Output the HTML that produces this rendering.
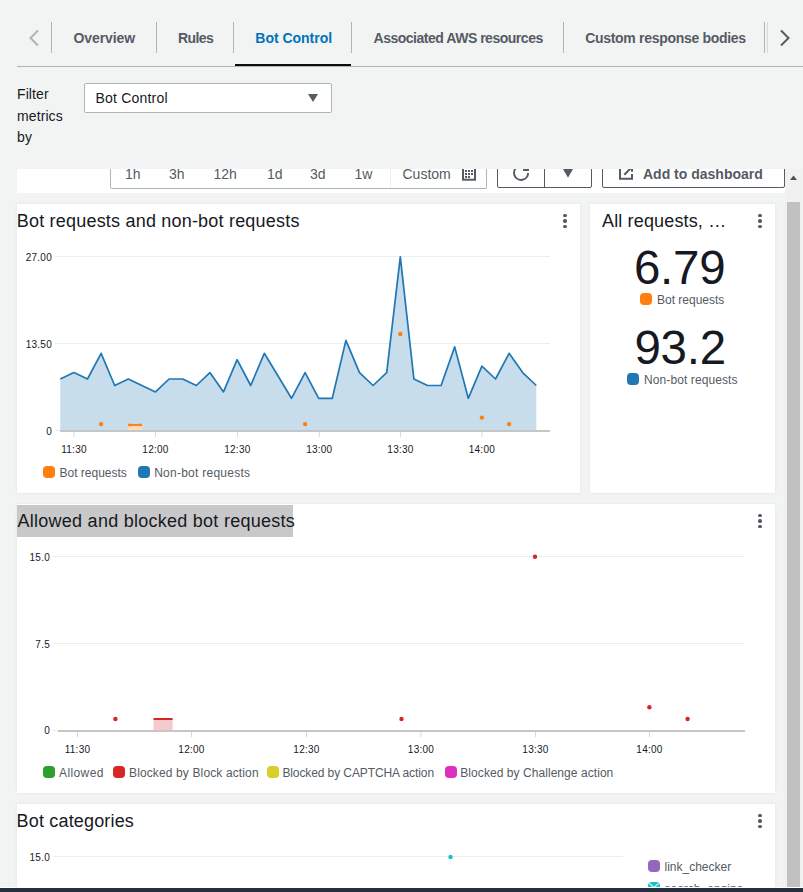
<!DOCTYPE html>
<html><head><meta charset="utf-8">
<style>
*{margin:0;padding:0;box-sizing:border-box}
html,body{width:803px;height:892px;overflow:hidden;background:#f2f3f3;font-family:"Liberation Sans",sans-serif;color:#16191f}
.a{position:absolute;white-space:nowrap}
.tab{position:absolute;top:30px;font-size:14px;font-weight:bold;color:#545b64;line-height:16px;text-align:center}
.div{position:absolute;top:22px;width:1px;height:31px;background:#aab7b8}
.card{position:absolute;background:#fff;box-shadow:0 0 3px rgba(0,0,0,.07)}
.title{position:absolute;font-size:18px;letter-spacing:0.17px;line-height:22px;color:#16191f;white-space:nowrap}
.kebab{position:absolute;width:4px;height:14px}
.kebab i{position:absolute;left:0.3px;width:3.4px;height:3.4px;border-radius:50%;background:#545b64}
.lbl{position:absolute;font-size:10px;letter-spacing:0.25px;line-height:12px;color:#16191f;white-space:nowrap}
.leg{position:absolute;font-size:12px;line-height:14px;color:#545b64;white-space:nowrap}
.sw{position:absolute;width:12px;height:12px;border-radius:4px}
.seg{position:absolute;top:165.7px;font-size:14px;color:#545b64;line-height:16px}
</style></head><body>

<!-- Tabs -->
<svg class="a" style="left:0;top:0" width="803" height="70">
  <polyline points="38,30.5 30.5,38 38,45.5" fill="none" stroke="#aab7b8" stroke-width="2"/>
  <polyline points="781,30.5 788.5,38 781,45.5" fill="none" stroke="#545b64" stroke-width="2"/>
  <rect x="17" y="66" width="786" height="1" fill="#aab7b8"/>
  <rect x="235" y="64" width="116" height="2" fill="#0a0d12"/>
</svg>
<div class="div" style="left:51px"></div>
<div class="div" style="left:156px"></div>
<div class="div" style="left:233px"></div>
<div class="div" style="left:351px"></div>
<div class="div" style="left:563px"></div>
<div class="div" style="left:764px"></div>
<div class="div" style="left:767px;background:#d5dbdb"></div>
<div class="tab" style="left:73.5px;letter-spacing:-0.1px">Overview</div>
<div class="tab" style="left:178px;letter-spacing:-0.6px">Rules</div>
<div class="tab" style="left:255.3px;color:#0073bb;letter-spacing:-0.02px">Bot Control</div>
<div class="tab" style="left:373.5px;letter-spacing:-0.48px">Associated AWS resources</div>
<div class="tab" style="left:585.2px;letter-spacing:-0.3px">Custom response bodies</div>

<!-- Filter -->
<div class="a" style="left:17px;top:83.8px;font-size:14px;line-height:21.8px;letter-spacing:0.1px;color:#16191f;white-space:normal;width:60px">Filter<br>metrics<br>by</div>
<div class="a" style="left:84px;top:83px;width:248px;height:30px;background:#fff;border:1px solid #aab7b8;border-radius:2px"></div>
<div class="a" style="left:95.5px;top:90px;font-size:14px;line-height:16px;letter-spacing:0.2px;color:#16191f">Bot Control</div>
<svg class="a" style="left:307px;top:93px" width="12" height="10"><polygon points="1,1 11,1 6,9" fill="#545b64"/></svg>

<!-- Dashboard clip -->
<div class="a" style="left:0;top:169px;width:785px;height:719px;overflow:hidden">
 <div class="a" style="left:0;top:-169px;width:785px;height:1100px">
  <!-- header strip -->
  <div class="a" style="left:17px;top:150px;width:768px;height:43px;background:#fff"></div>
  <div class="a" style="left:110px;top:150px;width:377px;height:39px;border:1px solid #aab7b8;border-top:none;border-radius:0 0 2px 2px"></div>
  <div class="a" style="left:390px;top:150px;width:1px;height:38px;background:#eaeded"></div>
  <div class="seg" style="left:125px">1h</div>
  <div class="seg" style="left:169px">3h</div>
  <div class="seg" style="left:213.5px">12h</div>
  <div class="seg" style="left:267px">1d</div>
  <div class="seg" style="left:310px">3d</div>
  <div class="seg" style="left:354.5px">1w</div>
  <div class="seg" style="left:402.5px;top:166.3px">Custom</div>
  <svg class="a" style="left:461px;top:160px" width="16" height="22">
    <rect x="2" y="1" width="12" height="18.7" fill="none" stroke="#545b64" stroke-width="2"/>
    <g fill="#545b64"><rect x="4" y="10" width="2" height="2"/><rect x="7" y="10" width="2" height="2"/><rect x="10" y="10" width="2" height="2"/>
    <rect x="4" y="13" width="2" height="2"/><rect x="7" y="13" width="2" height="2"/><rect x="10" y="13" width="2" height="2"/>
    <rect x="4" y="16" width="2" height="2"/><rect x="7" y="16" width="2" height="2"/></g>
  </svg>
  <div class="a" style="left:497px;top:150px;width:95px;height:38px;border:1px solid #545b64;border-radius:2px"></div>
  <div class="a" style="left:544px;top:150px;width:1px;height:38px;background:#545b64"></div>
  <svg class="a" style="left:510px;top:160px" width="24" height="24">
    <path d="M18.1,12.9 A7,7 0 1 1 7.6,6.84" fill="none" stroke="#545b64" stroke-width="2"/>
    <rect x="13" y="9" width="6" height="2" fill="#545b64"/>
  </svg>
  <svg class="a" style="left:562px;top:160px" width="12" height="18"><polygon points="1,9 11,9 6,17.8" fill="#545b64"/></svg>
  <div class="a" style="left:602px;top:150px;width:183px;height:38px;border:1px solid #545b64;border-radius:2px"></div>
  <svg class="a" style="left:617px;top:160px" width="18" height="22">
    <path d="M3,5 V18.85 H15 V14" fill="none" stroke="#545b64" stroke-width="2"/>
    <path d="M15,7 V11.7" fill="none" stroke="#545b64" stroke-width="2"/>
    <path d="M7.3,14.7 L14,8" fill="none" stroke="#545b64" stroke-width="2"/>
  </svg>
  <div class="a" style="left:643px;top:166px;font-size:14px;font-weight:bold;line-height:16px;color:#545b64">Add to dashboard</div>

  <!-- Card 1 -->
  <div class="card" style="left:17px;top:204px;width:563px;height:289px"></div>
  <div class="title" style="left:16.8px;top:210px;letter-spacing:0.2px">Bot requests and non-bot requests</div>
  <div class="kebab" style="left:563px;top:213px"><i style="top:0.7px"></i><i style="top:6.3px"></i><i style="top:11.8px"></i></div>

  <!-- Card 2 -->
  <div class="card" style="left:590px;top:204px;width:185px;height:289px"></div>
  <div class="title" style="left:602px;top:210px;letter-spacing:0.15px">All requests, …</div>
  <div class="kebab" style="left:758px;top:213px"><i style="top:0.7px"></i><i style="top:6.3px"></i><i style="top:11.8px"></i></div>
  <div class="a" style="left:634px;top:242.5px;font-size:47.5px;line-height:50px;letter-spacing:-0.3px;color:#16191f">6.79</div>
  <div class="sw" style="left:640px;top:293px;background:#ff7f0e"></div>
  <div class="leg" style="left:657px;top:293.0px">Bot requests</div>
  <div class="a" style="left:634.5px;top:322.5px;font-size:47.5px;line-height:50px;letter-spacing:-0.3px;color:#16191f">93.2</div>
  <div class="sw" style="left:627px;top:373px;background:#1f77b4"></div>
  <div class="leg" style="left:644px;top:373.0px;letter-spacing:0.1px">Non-bot requests</div>

  <!-- Card 3 -->
  <div class="card" style="left:17px;top:504px;width:758px;height:289px"></div>
  <div class="a" style="left:17px;top:505px;width:276px;height:32px;background:#c8c8c8"></div>
  <div class="title" style="left:17.5px;top:510px;letter-spacing:0.26px">Allowed and blocked bot requests</div>
  <div class="kebab" style="left:758px;top:513px"><i style="top:0.7px"></i><i style="top:6.3px"></i><i style="top:11.8px"></i></div>

  <!-- Card 4 -->
  <div class="card" style="left:17px;top:804px;width:758px;height:300px"></div>
  <div class="title" style="left:16.6px;top:809.5px">Bot categories</div>
  <div class="kebab" style="left:758px;top:813px"><i style="top:0.7px"></i><i style="top:6.3px"></i><i style="top:11.8px"></i></div>

  <!-- chart graphics -->
  <svg class="a" style="left:0;top:0" width="785" height="1100">
   <g fill="#eaeded">
    <rect x="55" y="256" width="495" height="1"/>
    <rect x="55" y="343" width="495" height="1"/>
    <rect x="55" y="430" width="5" height="1"/>
   </g>
   <polygon fill="#c7ddec" points="60.3,431 60.3,379.0 73.9,372.6 87.5,379.0 101.1,353.3 114.7,385.5 128.3,379.0 141.9,385.5 155.5,391.9 169.1,379.0 182.7,379.0 196.3,385.5 209.9,372.6 223.5,391.9 237.1,359.7 250.7,385.5 264.3,353.3 277.9,375.8 291.5,398.3 305.1,372.6 318.7,398.3 332.3,398.3 345.9,340.4 359.5,372.6 373.1,385.5 386.7,372.6 400.3,256.8 413.9,379.0 427.5,385.5 441.1,385.5 454.7,346.9 468.3,398.3 481.9,366.2 495.5,379.0 509.1,353.3 522.7,372.6 536.3,385.5 536.3,431"/>
   <polyline fill="none" stroke="#1f77b4" stroke-width="1.7" stroke-linejoin="round" points="60.3,379.0 73.9,372.6 87.5,379.0 101.1,353.3 114.7,385.5 128.3,379.0 141.9,385.5 155.5,391.9 169.1,379.0 182.7,379.0 196.3,385.5 209.9,372.6 223.5,391.9 237.1,359.7 250.7,385.5 264.3,353.3 277.9,375.8 291.5,398.3 305.1,372.6 318.7,398.3 332.3,398.3 345.9,340.4 359.5,372.6 373.1,385.5 386.7,372.6 400.3,256.8 413.9,379.0 427.5,385.5 441.1,385.5 454.7,346.9 468.3,398.3 481.9,366.2 495.5,379.0 509.1,353.3 522.7,372.6 536.3,385.5"/>
   <rect x="128.3" y="425" width="13.6" height="5" fill="#ffdcbc"/>
   <rect x="128.3" y="424" width="13.6" height="2" fill="#ff8519"/><circle cx="129.7" cy="425" r="1.4" fill="#ff7f0e"/><circle cx="140.5" cy="425" r="1.4" fill="#ff7f0e"/>
   <g fill="#ff7f0e">
    <circle cx="101.1" cy="424.1" r="2.2"/>
    <circle cx="305.1" cy="424.1" r="2.2"/>
    <circle cx="400.3" cy="334.0" r="2.2"/>
    <circle cx="481.9" cy="417.6" r="2.2"/>
    <circle cx="509.1" cy="424.1" r="2.2"/>
   </g>
   <rect x="60" y="430" width="490" height="2" fill="#c6c6c6"/>
   <g fill="#d5dbdb">
    <rect x="73.4" y="432" width="1" height="5"/><rect x="155" y="432" width="1" height="5"/><rect x="236.9" y="432" width="1" height="5"/>
    <rect x="318.8" y="432" width="1" height="5"/><rect x="400" y="432" width="1" height="5"/><rect x="481.4" y="432" width="1" height="5"/>
   </g>

   <!-- chart 2 -->
   <g fill="#eaeded">
    <rect x="53" y="556" width="692" height="1"/>
    <rect x="53" y="643" width="692" height="1"/>
    <rect x="53" y="730" width="5" height="1"/>
   </g>
   <rect x="153.5" y="719" width="19.1" height="11" fill="#f6c9ca"/>
   <rect x="153.5" y="718" width="19.1" height="2" fill="#d62728"/>
   <g fill="#d62728">
    <circle cx="115.4" cy="719" r="2.2"/>
    <circle cx="401.5" cy="719" r="2.2"/>
    <circle cx="535" cy="556.8" r="2.2"/>
    <circle cx="649.4" cy="707.3" r="2.2"/>
    <circle cx="687.6" cy="719" r="2.2"/>
   </g>
   <rect x="58" y="730" width="687" height="2" fill="#c6c6c6"/>
   <g fill="#d5dbdb">
    <rect x="77" y="732" width="1" height="5"/><rect x="191" y="732" width="1" height="5"/><rect x="306" y="732" width="1" height="5"/>
    <rect x="420.5" y="732" width="1" height="5"/><rect x="535" y="732" width="1" height="5"/><rect x="649" y="732" width="1" height="5"/>
   </g>

   <!-- chart 3 -->
   <rect x="53" y="856" width="570" height="1" fill="#eaeded"/>
   <circle cx="450.5" cy="857" r="2.2" fill="#17becf"/>
  </svg>

  <!-- chart 1 labels -->
  <div class="lbl" style="left:0;width:52px;text-align:right;top:251.5px">27.00</div>
  <div class="lbl" style="left:0;width:52px;text-align:right;top:338.5px">13.50</div>
  <div class="lbl" style="left:0;width:52px;text-align:right;top:426px">0</div>
  <div class="lbl" style="left:49px;width:50px;text-align:center;top:443.6px">11:30</div>
  <div class="lbl" style="left:130.5px;width:50px;text-align:center;top:443.6px">12:00</div>
  <div class="lbl" style="left:212.4px;width:50px;text-align:center;top:443.6px">12:30</div>
  <div class="lbl" style="left:294.3px;width:50px;text-align:center;top:443.6px">13:00</div>
  <div class="lbl" style="left:375.5px;width:50px;text-align:center;top:443.6px">13:30</div>
  <div class="lbl" style="left:456.9px;width:50px;text-align:center;top:443.6px">14:00</div>
  <div class="sw" style="left:43px;top:466px;background:#ff7f0e"></div>
  <div class="leg" style="left:59.5px;top:466.0px">Bot requests</div>
  <div class="sw" style="left:138px;top:466px;background:#1f77b4"></div>
  <div class="leg" style="left:154.2px;top:466.0px;letter-spacing:0.25px">Non-bot requests</div>

  <!-- chart 2 labels -->
  <div class="lbl" style="left:0;width:50px;text-align:right;top:551.5px">15.0</div>
  <div class="lbl" style="left:0;width:50px;text-align:right;top:638.5px">7.5</div>
  <div class="lbl" style="left:0;width:50px;text-align:right;top:725.3px">0</div>
  <div class="lbl" style="left:52.5px;width:50px;text-align:center;top:743.6px">11:30</div>
  <div class="lbl" style="left:166.5px;width:50px;text-align:center;top:743.6px">12:00</div>
  <div class="lbl" style="left:281.5px;width:50px;text-align:center;top:743.6px">12:30</div>
  <div class="lbl" style="left:396px;width:50px;text-align:center;top:743.6px">13:00</div>
  <div class="lbl" style="left:510.5px;width:50px;text-align:center;top:743.6px">13:30</div>
  <div class="lbl" style="left:624.5px;width:50px;text-align:center;top:743.6px">14:00</div>
  <div class="sw" style="left:43px;top:766px;background:#2ca02c"></div>
  <div class="leg" style="left:59px;top:766.0px;letter-spacing:0.4px">Allowed</div>
  <div class="sw" style="left:113px;top:766px;background:#d62728"></div>
  <div class="leg" style="left:129px;top:766.0px;letter-spacing:0.13px">Blocked by Block action</div>
  <div class="sw" style="left:266.5px;top:766px;background:#d8cf2a"></div>
  <div class="leg" style="left:282.4px;top:766.0px;letter-spacing:-0.1px">Blocked by CAPTCHA action</div>
  <div class="sw" style="left:445px;top:766px;background:#dc2fbf"></div>
  <div class="leg" style="left:460.3px;top:766.0px;letter-spacing:0.06px">Blocked by Challenge action</div>

  <!-- chart 3 labels -->
  <div class="lbl" style="left:0;width:50px;text-align:right;top:851.5px">15.0</div>
  <div class="sw" style="left:648px;top:860px;background:#9467bd"></div>
  <div class="leg" style="left:664.5px;top:860.0px">link_checker</div>
  <div class="sw" style="left:648px;top:882px;background:#17becf"></div>
  <svg class="a" style="left:648px;top:882px" width="12" height="12"><polyline points="1.5,1.5 5.9,5.5 10.5,1.5" fill="none" stroke="#bfeaf0" stroke-width="1.5"/></svg>
  <div class="leg" style="left:664.5px;top:882.0px">search_engine</div>
 </div>
</div>

<!-- scrollbar -->
<div class="a" style="left:785px;top:169px;width:17px;height:719px;background:#f1f1f1"></div>
<svg class="a" style="left:785px;top:169px" width="17" height="20"><polygon points="5,11 12,11 8.5,6.5" fill="#505050"/></svg>
<div class="a" style="left:787px;top:202px;width:13px;height:686px;background:#c1c1c1"></div>

<!-- bottom bar -->
<div class="a" style="left:0;top:887px;width:803px;height:1px;background:#ffffff"></div>
<div class="a" style="left:0;top:888px;width:803px;height:4px;background:#232f3e"></div>
</body></html>
